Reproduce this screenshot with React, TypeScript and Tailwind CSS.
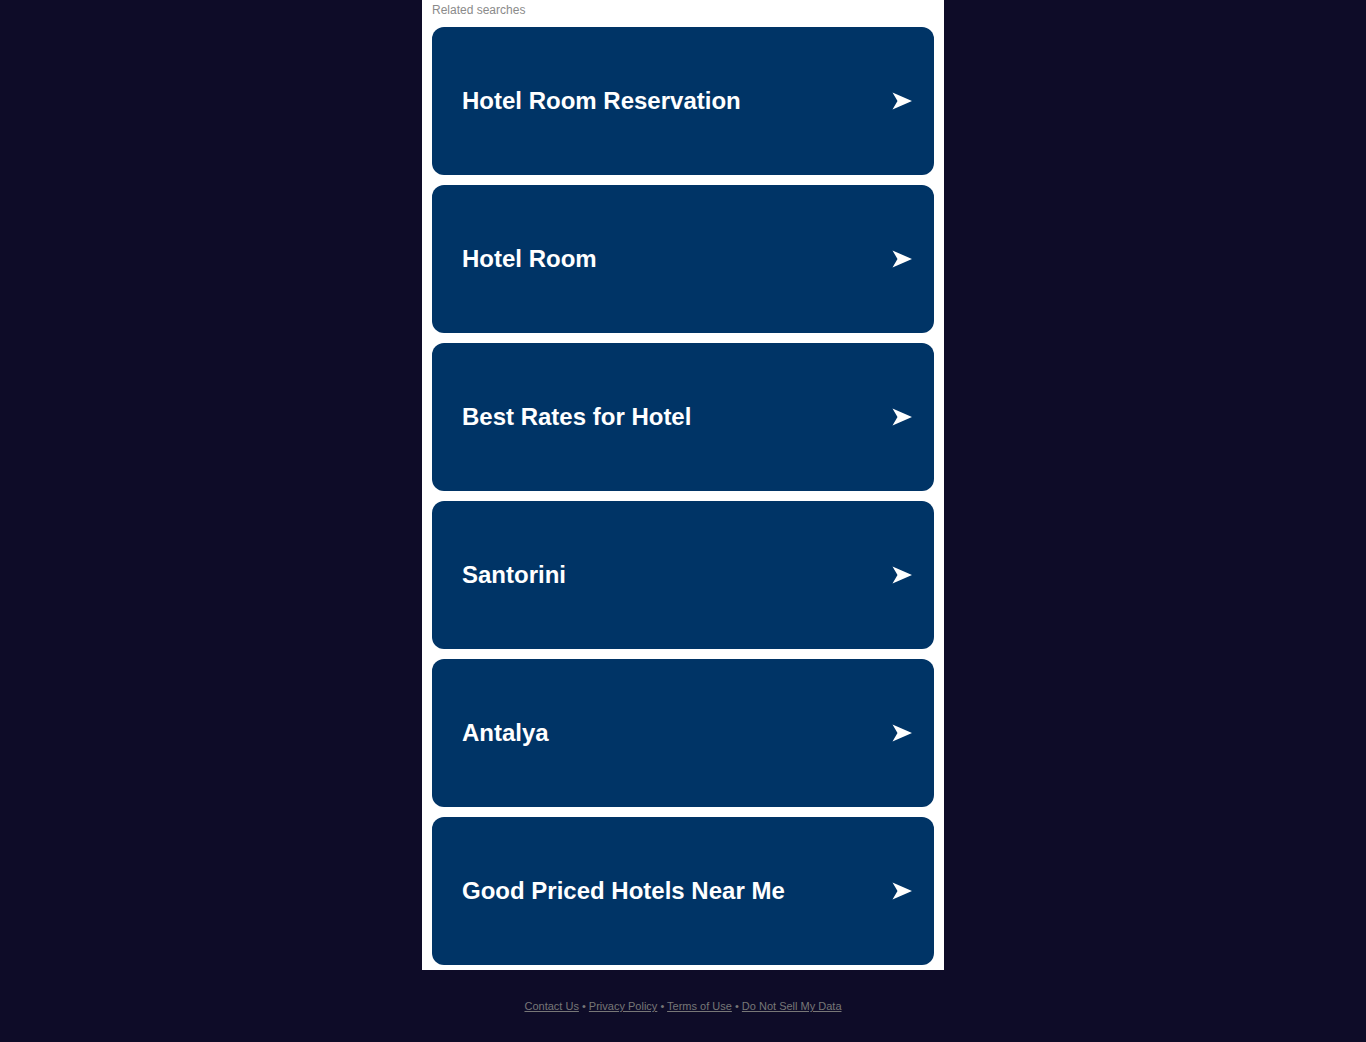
const searches = [
  'Hotel Room Reservation',
  'Hotel Room',
  'Best Rates for Hotel',
  'Santorini',
  'Antalya',
  'Good Priced Hotels Near Me',
]

function Arrow() {
  return (
    <svg width="20" height="18" viewBox="0 0 20 18" className="shrink-0">
      <path d="M0.5 0.5 L20 9 L0.5 17.5 L5.5 9 Z" fill="#ffffff" />
    </svg>
  )
}

export default function App() {
  return (
    <div
      className="min-h-[1042px] bg-[#0e0c28] flex flex-col items-center"
      style={{ fontFamily: '"Liberation Sans", Arial, Helvetica, sans-serif' }}
    >
      {/* Panel */}
      <div className="w-[522px] bg-white px-[10px] pb-[5px]">
        <div className="h-[27px] text-[12px] leading-[20px] text-[#8a8a8a]">Related searches</div>
        <div className="flex flex-col gap-[10px]">
          {searches.map((s) => (
            <a
              key={s}
              href="#"
              className="h-[148px] rounded-[12px] bg-[#003466] flex items-center justify-between pl-[30px] pr-[22px]"
            >
              <span className="text-white text-[24px] font-bold leading-none">{s}</span>
              <Arrow />
            </a>
          ))}
        </div>
      </div>

      {/* Footer */}
      <div className="mt-[30px] text-[11px] leading-[13px] text-[#777777]">
        <a href="#" className="underline">Contact Us</a>
        <span> • </span>
        <a href="#" className="underline">Privacy Policy</a>
        <span> • </span>
        <a href="#" className="underline">Terms of Use</a>
        <span> • </span>
        <a href="#" className="underline">Do Not Sell My Data</a>
      </div>
    </div>
  )
}
